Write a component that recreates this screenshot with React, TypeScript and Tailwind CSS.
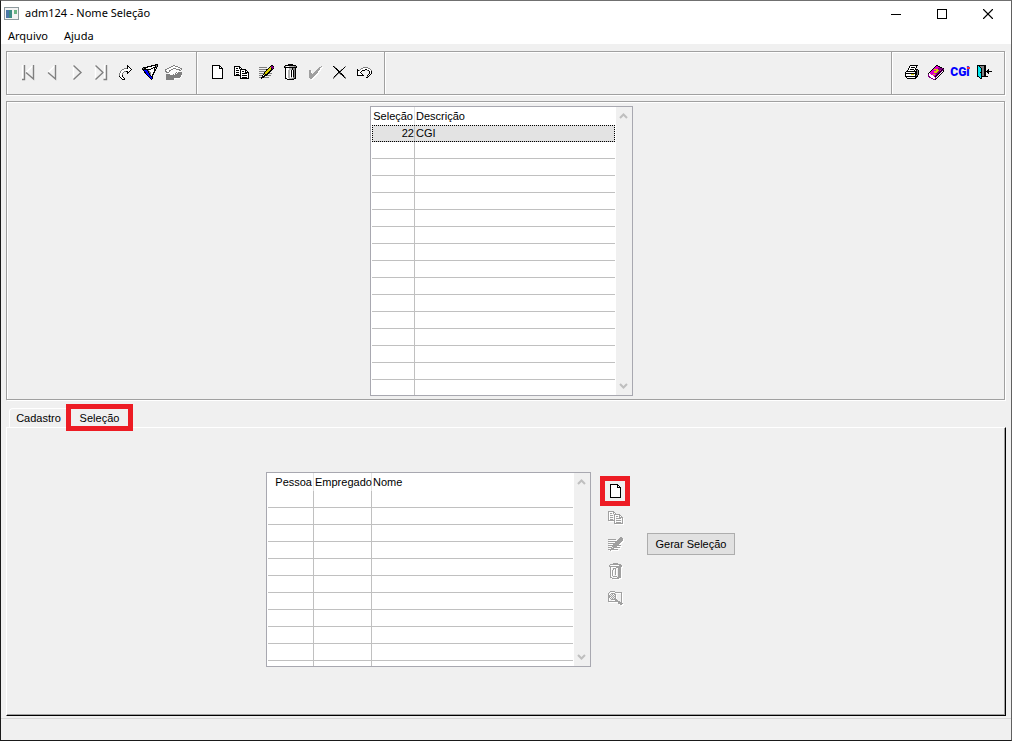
import React, { useState } from 'react';
import { Minus, X } from 'lucide-react';

const palette: Record<string, string> = {
  k: '#000000',
  w: '#ffffff',
  g: '#808080',
  l: '#b4b4b4',
  y: '#d8d000',
  p: '#800080',
  m: '#e000c8',
  b: '#0000ff',
  c: '#00e8f0',
};

const icons = {
  redo: [
    '........k....',
    '........kk...',
    '........kwk..',
    '.....gggkwwk.',
    '...ggwwwwwwwk',
    '..gwwwwwwwwk.',
    '.gwwwggkkwk..',
    '.gwwg...kk...',
    'gwwg....k....',
    'gwwg.........',
    'gwwk.........',
    'kwwk.........',
    '.kwwk........',
    '..kwwk.......',
    '...kkk.......',
  ],
  filter: [
    '.............kkk',
    '.........kkkkkgk',
    '.....kkkkkwwwkgk',
    '.kkkkkwwwwwkkkk.',
    'kgkkwwwwwkkwkwk.',
    'kkkkkkkkkwwwkk..',
    '.kbbbkgwwwwwkk..',
    '..kbbbkgwwwwk...',
    '..kkbbkggwwkk...',
    '...kbbbkgwwk....',
    '....kbbkgwkk....',
    '.....kbbkwk.....',
    '......kbbkk.....',
    '.......kbbk.....',
    '........kbk.....',
    '.........k......',
  ],
  phone: [
    '........ggw......',
    '......ggwwgggw...',
    '....ggwwwwwwwgg..',
    '..ggwwwwgggwwwwgg',
    'ggwwwwggwwwggggwg',
    'gwwwggwwwwwwwwggw',
    'ggwwgwwwwwwwwwww.',
    '.gggwwwwwwwgwgggg',
    '...wwwwwwwgwggggg',
    '.ggggwwwgwggggggg',
    '.gggggggggggggggw',
    '.gggggggggggggggw',
    '.ggggggggggggggw.',
    '.ggggggggwwwwww..',
    '.ggggggggw.......',
  ],
  page: [
    'kkkkkkkk...',
    'kwwwwwwkk..',
    'kwwwwwwkwk.',
    'kwwwwwwkkkk',
    'kwwwwwwwwwk',
    'kwwwwwwwwwk',
    'kwwwwwwwwwk',
    'kwwwwwwwwwk',
    'kwwwwwwwwwk',
    'kwwwwwwwwwk',
    'kwwwwwwwwwk',
    'kwwwwwwwwwk',
    'kwwwwwwwwwk',
    'kkkkkkkkkkk',
  ],
  copy: [
    'kkkkkk.........',
    'kwwwwkk........',
    'kwkkwkwk.......',
    'kwwwwwkkkkkk...',
    'kwkkkwkwwwwkk..',
    'kwwwwwkwkkwkwk.',
    'kwkkkwkwwwwkkkk',
    'kwwwwwkwkkkkkwk',
    'kwkkkwkwwwwwwwk',
    'kkkkkkkwkkkkkwk',
    '......kwwwwwwwk',
    '......kwkkkkkwk',
    '......kkkkkkkkk',
  ],
  edit: [
    '............kk.',
    '...........kppk',
    'gggggggg..kyppp',
    '.........kyykpk',
    'gggggggkkyyykk.',
    '.......kyyykk..',
    'ggggggkyyykk...',
    '.....kyyykk....',
    'gggggkyykkggg..',
    '....kykkk......',
    'gggkwkkkgggg...',
    '...kkk.........',
    'ggkkkggggg.....',
    '..k............',
  ],
  trash: [
    '....kkkkk....',
    '.kkkkkkkkkkk.',
    'kgwwwlllllggk',
    'kkkkkkkkkkkkk',
    '.kwwwlllkggk.',
    '.kwwwlllkggk.',
    '.kwwllwkwkgk.',
    '.kwwllwkwkgk.',
    '.kwwllwkwkgk.',
    '.kwwllwkwkgk.',
    '.kwwllwkwkgk.',
    '.kwwllwkwkgk.',
    '.kwwllwkwkgk.',
    '.kwwllwlwggk.',
    '.kkwwlllggkk.',
    '...kkkkkkk...',
  ],
  trashOff: [
    '....kkkkk....',
    '.kkkkkkkkkkk.',
    'k.........kkk',
    'kkkkkkkkkkkkk',
    '.k.....kkkkk.',
    '.k..kkk..kkk.',
    '.k..k.k..kkk.',
    '.k.k..k..kkk.',
    '.k.k..k..kkk.',
    '.k.k..k..kkk.',
    '.k.k..k..kkk.',
    '.k.k..k..kkk.',
    '.k.k.....kkk.',
    '.k..kkkk.kkk.',
    '.kk.....kkkk.',
    '...kkkkkkk...',
  ],
  check: [
    '............g',
    '..........gg.',
    '.........gg..',
    '........ggg..',
    'gg.....ggg...',
    'gg....ggg....',
    'gg...gggg....',
    'ggg.gggg.....',
    'ggggggg......',
    'gggggg.......',
    'ggggg........',
    'gggg.........',
    '.gg..........',
  ],
  cancel: [
    'kg..........g',
    '.kg........k.',
    '..kk......k..',
    '...kk...gk...',
    '....kk.gk....',
    '.....kkk.....',
    '.....kkg.....',
    '....kggkk....',
    '...kg..gkk...',
    '..kg.....kk..',
    '.kg.......kg.',
    'gg.........kg',
    'g...........g',
  ],
  undo: [
    '......ggggg....',
    '....ggwwwwwgg..',
    'k..gwwwwkkwwwg.',
    'kkgwwkkk..gkwwg',
    'kwwwk.......kwk',
    'kwwk........kwk',
    'kwwwk.......kwk',
    'kwwwwk.....kwk.',
    'kkkkkkk...kwk..',
    '..........gk...',
    '.........kk....',
  ],
  printer: [
    '.....kkkkkkkk.',
    '....kwwwwwwk..',
    '....kwkkkkwk..',
    '...kwwwwwwk...',
    '...kwkkkkwkkk.',
    '..kwwwwwwk.kgk',
    '.kkkkkkkkkkkgk',
    'kwwwwwwwwwkkgk',
    'kkkkkkkkkkkkgk',
    'kwwwwwyyywkkgk',
    'kwwwwwwwwwkgk.',
    'kkkkkkkkkkkkk.',
    '.kwwwwwwwwkk..',
    '..kkkkkkkkk...',
  ],
  book: [
    '........kk......',
    '.......kmmkk....',
    '......kmmmmpkk..',
    '.....kmmmmpppppk',
    '....kmyyyyppppkp',
    '...kmmmmyyypmkpk',
    '..kmmmyyyyppkpwk',
    '.kmmmmyyyppkpwk.',
    'kwmmmmmmppkpwk..',
    'pwwmmyympkpwk...',
    'pwwwwmmpkpwk....',
    'ppwwwwpkpwk.....',
    '.ppwwwwpwk......',
    '...ppwwpk.......',
    '.....ppk........',
  ],
  door: [
    'kkkkkkkkk......',
    'kckggggkk......',
    'kcckgggkk......',
    'kccckggkk......',
    'kccckggkk..k...',
    'kccckggkk.kk...',
    'kccckggkkkkkkkk',
    'kcckkggkk.kk...',
    'kccckggkk..k...',
    'kccckggkk......',
    'kccckggkk......',
    'kkcckkkkkkk....',
    '..kck..........',
    '...kk..........',
  ],
  lookup: [
    '..kkkkk........',
    '.kwwwwwkkkkkkk.',
    'kwwkkkkwwwwwwk.',
    'kwkwkwkkwwwwwk.',
    'kkwkwkwkwwwwwk.',
    'kkkwkwkkwwwwwk.',
    'kkwkwkwkwwwwwk.',
    'kwkwkwkkwwwwwk.',
    'kwwkkkkkkwwwwk.',
    'kwwwwwwkkkwwwk.',
    'kkkkkkkkkkkkwk.',
    '..........kkkk.',
    '..........kkkkk',
    '............kk.',
  ],
};

type IconName = keyof typeof icons;

const PixelIcon = ({ name, disabled = false }: { name: IconName; disabled?: boolean }) => {
  const rows = icons[name];
  const width = rows[0].length;
  const cells = rows.flatMap((row, y) => [...row].map((c, x) => ({ c, x, y }))).filter((p) => p.c !== '.');
  const inked = cells.filter((p) => p.c !== 'w');

  return (
    <svg width={width} height={rows.length} shapeRendering="crispEdges" className="overflow-visible shrink-0" aria-hidden="true">
      {disabled && inked.map((p) => <rect key={`s${p.x}-${p.y}`} x={p.x + 1} y={p.y + 1} width="1" height="1" fill="#fff" />)}
      {(disabled ? inked : cells).map((p) => (
        <rect key={`${p.x}-${p.y}`} x={p.x} y={p.y} width="1" height="1" fill={disabled ? '#a0a0a0' : palette[p.c]} />
      ))}
    </svg>
  );
};

const NavIcon = ({ back = false, edge = false }: { back?: boolean; edge?: boolean }) => (
  <svg width="13" height="15" viewBox="0 0 13 15" fill="none" strokeWidth="1.4" className="overflow-visible" aria-hidden="true">
    {back ? (
      <g transform={edge ? undefined : 'translate(-2 0)'}>
        {edge && <path d="M.5 0V14" stroke="#fff" />}
        {edge && <path d="M2.5 0V14.5H0" stroke="#808080" />}
        <path d="M11 .5L4 7.5" stroke="#fff" />
        <path d="M4 7.5L11.5 14V0" stroke="#808080" />
      </g>
    ) : (
      <g transform={edge ? undefined : 'translate(2 0)'}>
        <path d="M1.5 14V0" stroke="#fff" />
        <path d="M1.5 .5L9 7.5L1.5 14.5" stroke="#808080" />
        {edge && <path d="M10.5 14V.5H12" stroke="#fff" />}
        {edge && <path d="M12.5 0V14.5H9.5" stroke="#808080" />}
      </g>
    )}
  </svg>
);

const ToolButton = ({ label, disabled, children }: { label: string; disabled?: boolean; children: React.ReactNode }) => (
  <button type="button" aria-label={label} disabled={disabled} className="w-6 h-6 flex items-center justify-center">
    {children}
  </button>
);

const ScrollBar = () => (
  <div className="w-4 pr-0.5 shrink-0 bg-[#f0f0f0] flex flex-col items-center justify-between py-1.5" aria-hidden="true">
    <svg width="9" height="6" fill="none" stroke="#bfbfbf" strokeWidth="2"><path d="M1 5L4.5 1.5L8 5" /></svg>
    <svg width="9" height="6" fill="none" stroke="#bfbfbf" strokeWidth="2"><path d="M1 1L4.5 4.5L8 1" /></svg>
  </div>
);

type Column = { title: string; width: string; align?: string };

type GridProps = { label: string; columns: Column[]; data: string[][]; blank: number; lastRow: string };

const DataGrid = ({ label, columns, data, blank, lastRow }: GridProps) => {
  const rows = [...data, ...Array.from({ length: blank }, () => columns.map(() => ''))];
  const last = columns.length - 1;

  return (
    <div className="flex bg-white border border-[#a8a8b0]">
      <table aria-label={label} className="table-fixed w-px border-separate border-spacing-0 mx-px leading-4">
        <thead>
          <tr>
            {columns.map((col, i) => (
              <th
                key={col.title}
                className={`${col.width} ${col.align ?? 'text-left'} h-[18px] p-0 px-px font-normal whitespace-nowrap ${i < last ? 'border-r border-[#e3e3e3]' : ''}`}
              >
                {col.title}
              </th>
            ))}
          </tr>
        </thead>
        <tbody>
          {rows.map((row, r) => (
            <tr key={r} className={r < data.length ? 'bg-[#e3e3e3] outline-1 outline-dotted outline-black -outline-offset-1' : ''}>
              {row.map((cell, i) => (
                <td
                  key={i}
                  className={`h-[17px] p-0 border-b border-[#c0c0c0] ${i < last ? 'border-r' : 'pl-px'} ${columns[i].align ?? 'text-left'}`}
                >
                  {cell}
                </td>
              ))}
            </tr>
          ))}
          <tr>
            {columns.map((col, i) => (
              <td key={col.title} className={`${lastRow} p-0 border-[#c0c0c0] ${i < last ? 'border-r' : ''}`} />
            ))}
          </tr>
        </tbody>
      </table>
      <ScrollBar />
    </div>
  );
};

const rowActions: { icon: IconName; label: string }[] = [
  { icon: 'copy', label: 'Copiar' },
  { icon: 'edit', label: 'Editar' },
  { icon: 'trashOff', label: 'Excluir' },
  { icon: 'lookup', label: 'Consultar' },
];

const App = () => {
  const [tab, setTab] = useState('selecao');

  return (
    <div className="min-h-screen flex flex-col bg-[#f0f0f0] border border-[#1a1a1a] border-t-[#707070] border-r-[#606060] text-black text-[11px] font-['Liberation_Sans',Arial,sans-serif]">
      <header className="bg-white text-[11px] font-['Noto_Sans','Segoe_UI',sans-serif]">
        <div className="h-[25px] flex items-center">
          <svg width="15" height="13" className="ml-[3px] mr-1.5" aria-hidden="true">
            <rect x=".5" y=".5" width="14" height="12" fill="#f4f4f4" stroke="#8e9a9e" />
            <rect x="2" y="3" width="6" height="8" fill="#3c8c84" />
            <rect x="2" y="3" width="3" height="8" fill="#4b78a8" />
            <rect x="10" y="3" width="3" height="4" fill="#6cb586" />
          </svg>
          <h1 className="flex-1">adm124 - Nome Seleção</h1>
          <button type="button" aria-label="Minimizar" className="w-[46px] h-6 flex items-center justify-center">
            <Minus className="w-4 h-4" strokeWidth={1.5} shapeRendering="crispEdges" />
          </button>
          <button type="button" aria-label="Maximizar" className="w-[46px] h-6 flex items-center justify-center">
            <svg width="10" height="10" fill="none" stroke="currentColor" aria-hidden="true"><rect x=".5" y=".5" width="9" height="9" /></svg>
          </button>
          <button type="button" aria-label="Fechar" className="w-[46px] h-6 flex items-center justify-center">
            <X className="w-[18px] h-[18px]" strokeWidth={1.5} />
          </button>
        </div>
        <nav className="h-[18px] pt-0.5 flex items-center gap-4 pl-[7px]">
          <button type="button">Arquivo</button>
          <button type="button">Ajuda</button>
        </nav>
      </header>

      <div role="toolbar" className="mt-[7px] ml-[5px] mr-1.5 h-11 flex border border-[#a0a0a0] shadow-[1px_1px_0_#fff,inset_1px_1px_0_#fff]">
        <div className="w-[190px] pl-[9px] pr-2.5 pb-0.5 flex items-center justify-between border-r border-[#a0a0a0]">
          <ToolButton label="Primeiro" disabled><NavIcon back edge /></ToolButton>
          <ToolButton label="Anterior" disabled><NavIcon back /></ToolButton>
          <ToolButton label="Próximo" disabled><NavIcon /></ToolButton>
          <ToolButton label="Último" disabled><NavIcon edge /></ToolButton>
          <ToolButton label="Ir para"><PixelIcon name="redo" /></ToolButton>
          <ToolButton label="Filtrar"><PixelIcon name="filter" /></ToolButton>
          <ToolButton label="Contato" disabled><PixelIcon name="phone" /></ToolButton>
        </div>
        <div className="w-[188px] px-2 pb-0.5 flex items-center justify-between border-r border-[#a0a0a0] shadow-[1px_0_0_#fff,inset_1px_0_0_#fff]">
          <ToolButton label="Novo"><PixelIcon name="page" /></ToolButton>
          <ToolButton label="Copiar"><PixelIcon name="copy" /></ToolButton>
          <ToolButton label="Editar"><PixelIcon name="edit" /></ToolButton>
          <ToolButton label="Excluir"><PixelIcon name="trash" /></ToolButton>
          <ToolButton label="Confirmar" disabled><PixelIcon name="check" disabled /></ToolButton>
          <ToolButton label="Cancelar"><PixelIcon name="cancel" /></ToolButton>
          <ToolButton label="Desfazer"><PixelIcon name="undo" /></ToolButton>
        </div>
        <div className="ml-auto w-[113px] pl-2 pb-0.5 flex items-center border-l border-[#a0a0a0] shadow-[inset_1px_0_0_#fff]">
          <ToolButton label="Imprimir"><PixelIcon name="printer" /></ToolButton>
          <ToolButton label="Manual"><PixelIcon name="book" /></ToolButton>
          <ToolButton label="CGI">
            <span className="relative leading-4 font-['Roboto',sans-serif] font-black text-xs text-[#0000ff]">
              CGi
              <span className="absolute right-0 top-[3px] w-[3px] h-0.5 bg-red-500" />
            </span>
          </ToolButton>
          <ToolButton label="Sair"><PixelIcon name="door" /></ToolButton>
        </div>
      </div>

      <section className="mt-1.5 ml-[5px] mr-1.5 pt-1 pb-[3px] pr-2 flex justify-center border border-[#a0a0a0] shadow-[1px_1px_0_#fff,inset_1px_1px_0_#fff]">
        <DataGrid
          label="Seleções"
          columns={[
            { title: 'Seleção', width: 'w-[43px]', align: 'text-right' },
            { title: 'Descrição', width: 'w-[200px]' },
          ]}
          data={[['22', 'CGI']]}
          blank={14}
          lastRow="h-[15px]"
        />
      </section>

      <div role="tablist" className="relative z-10 mt-1 pl-2 h-[23px] flex items-start">
        <button
          type="button"
          role="tab"
          aria-selected={tab === 'cadastro'}
          onClick={() => setTab('cadastro')}
          className="mt-1 h-[19px] w-[57px] pt-px pl-px border-t border-l border-white rounded-tl-sm"
        >
          Cadastro
        </button>
        <button
          type="button"
          role="tab"
          aria-selected={tab === 'selecao'}
          onClick={() => setTab('selecao')}
          className="h-[27px] w-[67px] pt-px bg-[#f0f0f0] border-[5px] border-[#ed1c24]"
        >
          Seleção
        </button>
      </div>

      <section role="tabpanel" className="flex-1 ml-[5px] mr-[5px] pt-11 pr-[11px] flex justify-center items-start border border-white border-r-black border-b-black shadow-[inset_-1px_-1px_0_#a0a0a0]">
        <DataGrid
          label="Empregados"
          columns={[
            { title: 'Pessoa', width: 'w-[46px]', align: 'text-right' },
            { title: 'Empregado', width: 'w-[58px]' },
            { title: 'Nome', width: 'w-[201px]' },
          ]}
          data={[]}
          blank={10}
          lastRow="h-[5px]"
        />
        <div className="mt-1 ml-[9px] flex flex-col items-center gap-[5px]">
          <button type="button" aria-label="Novo" className="w-[30px] h-[30px] -mb-[5px] flex items-center justify-center border-[5px] border-[#ed1c24]">
            <PixelIcon name="page" />
          </button>
          {rowActions.map(({ icon, label }) => (
            <button key={icon} type="button" aria-label={label} disabled className="w-6 h-[22px] flex items-center justify-center">
              <PixelIcon name={icon} disabled />
            </button>
          ))}
        </div>
        <button type="button" className="mt-[61px] ml-[17px] w-[88px] h-[22px] bg-[#e1e1e1] border border-[#adadad]">
          Gerar Seleção
        </button>
      </section>

      <footer className="mt-0.5 h-[22px] border-t border-[#d7d7d7]" />
    </div>
  );
};

export default App;
